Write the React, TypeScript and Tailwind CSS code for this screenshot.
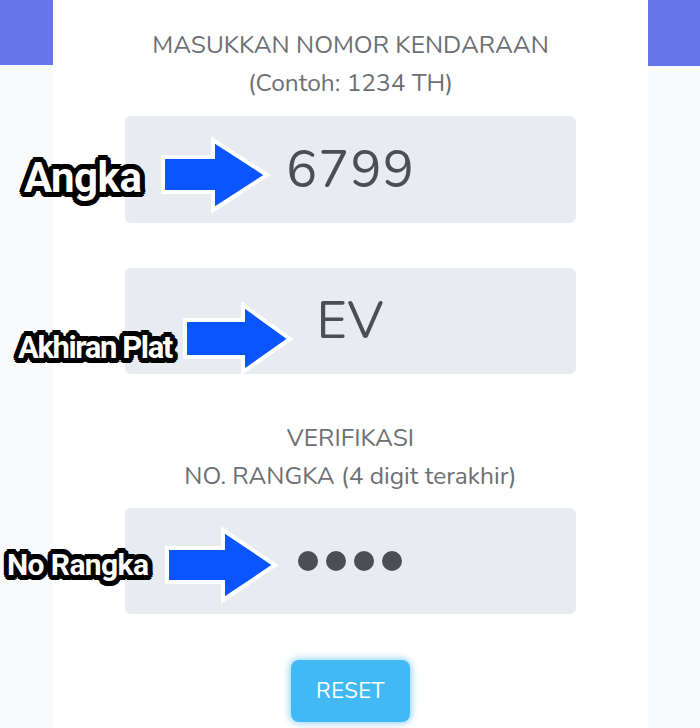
import React from 'react'

// outline hitam tebal di sekitar huruf putih
const outline =
    "[text-shadow:5px_0_0_#000,-5px_0_0_#000,0_5px_0_#000,0_-5px_0_#000,3.5px_3.5px_0_#000,-3.5px_3.5px_0_#000,3.5px_-3.5px_0_#000,-3.5px_-3.5px_0_#000,4.6px_1.9px_0_#000,-4.6px_1.9px_0_#000,4.6px_-1.9px_0_#000,-4.6px_-1.9px_0_#000,1.9px_4.6px_0_#000,-1.9px_4.6px_0_#000,1.9px_-4.6px_0_#000,-1.9px_-4.6px_0_#000,2px_0_0_#000,-2px_0_0_#000,0_2px_0_#000,0_-2px_0_#000]"

const labelCls = `absolute font-bold text-white leading-none whitespace-nowrap [font-family:Roboto,'Liberation_Sans',sans-serif] ${outline}`

function Arrow({ left, top, w, h, points }: { left: number; top: number; w: number; h: number; points: string }) {
    return (
        <svg
            className="absolute overflow-visible"
            style={{ left, top }}
            width={w}
            height={h}
            viewBox={`0 0 ${w} ${h}`}
        >
            <polygon points={points} fill="#0a55ff" stroke="#ffffff" strokeWidth="4" strokeLinejoin="miter" />
        </svg>
    )
}

export default function App() {
    return (
        <div className="relative w-[700px] h-[728px] overflow-hidden bg-[#f9fafb] [font-family:Nunito,Lato,'Noto_Sans',sans-serif]">
            <div className="flex h-full">
                {/* sisi kiri */}
                <div className="w-[53px] flex flex-col">
                    <div className="h-[65px] bg-[#6677ee]" />
                </div>

                {/* kartu utama */}
                <div className="w-[595px] h-full bg-white flex flex-col items-center pt-[26px] text-[#6c6f73]">
                    <p className="text-[24.5px] leading-[38px]">MASUKKAN NOMOR KENDARAAN</p>
                    <p className="text-[24.5px] leading-[38px]">(Contoh: 1234 TH)</p>

                    <div className="mt-[14px] w-[451px] h-[107px] rounded-md bg-[#e8ebef] flex items-center justify-center">
                        <span className="text-[52px] text-[#4b4f54] tracking-[1px]">6799</span>
                    </div>

                    <div className="mt-[45px] w-[451px] h-[106px] rounded-md bg-[#e8ebef] flex items-center justify-center">
                        <span className="text-[52px] text-[#4b4f54] tracking-[1px]">EV</span>
                    </div>

                    <p className="mt-[45px] text-[24.5px] leading-[38px]">VERIFIKASI</p>
                    <p className="text-[24.5px] leading-[38px]">NO. RANGKA (4 digit terakhir)</p>

                    <div className="mt-[13px] w-[451px] h-[106px] rounded-md bg-[#e8ebef] flex items-center justify-center gap-[8px] pr-[2px]">
                        <span className="w-[20px] h-[20px] rounded-full bg-[#4b4f54]" />
                        <span className="w-[20px] h-[20px] rounded-full bg-[#4b4f54]" />
                        <span className="w-[20px] h-[20px] rounded-full bg-[#4b4f54]" />
                        <span className="w-[20px] h-[20px] rounded-full bg-[#4b4f54]" />
                    </div>

                    <button className="mt-[46px] w-[119px] h-[62px] rounded-lg bg-[#42b9f4] text-white text-[22px] tracking-[0.5px] shadow-[0_0_6px_2px_rgba(120,200,250,0.7)]">
                        RESET
                    </button>
                </div>

                {/* sisi kanan */}
                <div className="w-[52px] flex flex-col">
                    <div className="h-[66px] bg-[#6677ee]" />
                </div>
            </div>

            {/* anotasi */}
            <Arrow left={163} top={140} w={104} h={70} points="0,17 50,17 50,0 104,35 50,70 50,52 0,52" />
            <Arrow left={185} top={305} w={105} h={67} points="0,15 58,15 58,0 105,34 58,67 58,52 0,52" />
            <Arrow left={167} top={530} w={108} h={70} points="0,18 56,18 56,0 108,35 56,70 56,52 0,52" />

            <span className={`${labelCls} left-[24px] top-[157px] text-[42px] tracking-[-0.5px]`}>Angka</span>
            <span className={`${labelCls} left-[18px] top-[332px] text-[31px] tracking-[-1.4px]`}>Akhiran Plat</span>
            <span className={`${labelCls} left-[7px] top-[550px] text-[30px] tracking-[-0.6px]`}>No Rangka</span>
        </div>
    )
}
